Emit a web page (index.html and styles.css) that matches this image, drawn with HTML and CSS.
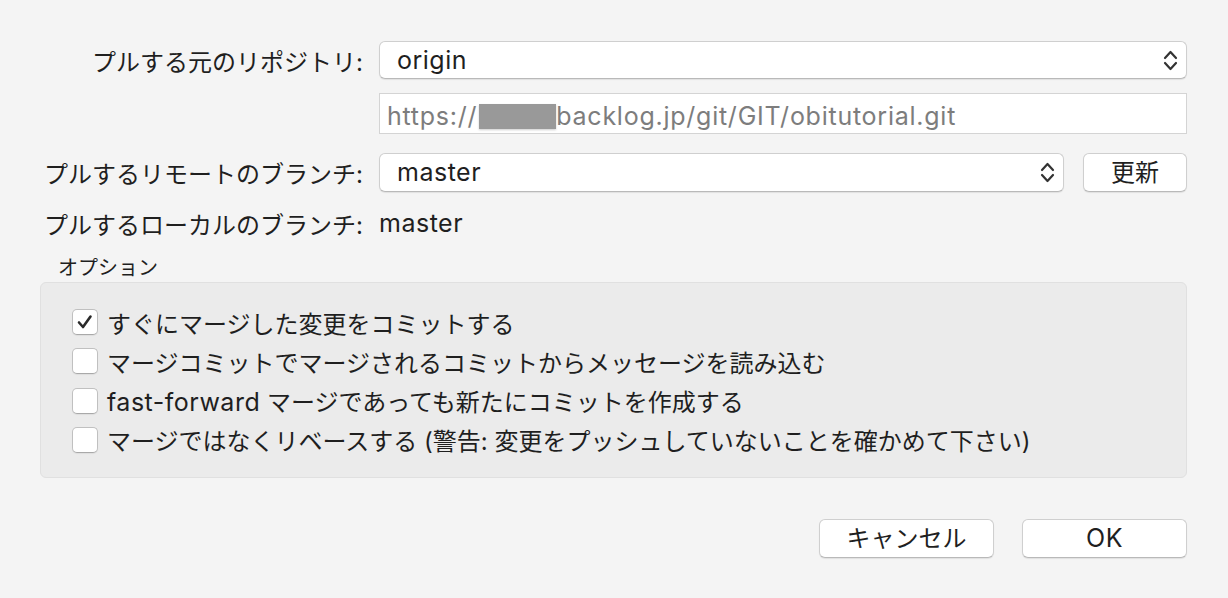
FILE: index.html
```html
<!DOCTYPE html>
<html lang="ja">
<head>
<meta charset="utf-8">
<title>プル</title>
<link rel="stylesheet" href="styles.css">
</head>
<body>
<div class="dialog">
  <div class="row row-repo">
    <div class="label">プルする元のリポジトリ:</div>
    <div class="popup popup-wide">
      <span class="popup-text lat">origin</span>
      <svg class="chev" viewBox="0 0 15 23" width="15" height="23"><path d="M2 9 L7.5 3 L13 9 M2 14 L7.5 20 L13 14" fill="none" stroke="#333" stroke-width="2.2" stroke-linecap="round" stroke-linejoin="round"/></svg>
    </div>
  </div>
  <div class="row row-url">
    <div class="label"></div>
    <div class="field"><span class="lat">https://</span><span class="redact"></span><span class="lat">backlog.jp/git/GIT/obitutorial.git</span></div>
  </div>
  <div class="row row-remote">
    <div class="label">プルするリモートのブランチ:</div>
    <div class="popup popup-branch">
      <span class="popup-text lat">master</span>
      <svg class="chev" viewBox="0 0 15 23" width="15" height="23"><path d="M2 9 L7.5 3 L13 9 M2 14 L7.5 20 L13 14" fill="none" stroke="#333" stroke-width="2.2" stroke-linecap="round" stroke-linejoin="round"/></svg>
    </div>
    <button class="btn btn-refresh">更新</button>
  </div>
  <div class="row row-local">
    <div class="label">プルするローカルのブランチ:</div>
    <div class="value lat">master</div>
  </div>
  <div class="options-title">オプション</div>
  <div class="options">
    <label class="opt"><span class="cb checked"><svg viewBox="0 0 26 26" width="26" height="26"><path d="M7 13.5 L11 18 L18.5 7.5" fill="none" stroke="#2a2a2a" stroke-width="2.6" stroke-linecap="round" stroke-linejoin="round"/></svg></span><span>すぐにマージした変更をコミットする</span></label>
    <label class="opt"><span class="cb"></span><span>マージコミットでマージされるコミットからメッセージを読み込む</span></label>
    <label class="opt"><span class="cb"></span><span><span class="lat">fast-forward</span> マージであっても新たにコミットを作成する</span></label>
    <label class="opt"><span class="cb"></span><span>マージではなくリベースする (警告: 変更をプッシュしていないことを確かめて下さい)</span></label>
  </div>
  <div class="actions">
    <button class="btn btn-cancel">キャンセル</button>
    <button class="btn btn-ok"><span class="lat">OK</span></button>
  </div>
</div>
</body>
</html>
```
FILE: styles.css
```css
* { box-sizing: border-box; }
html, body {
  margin: 0;
  padding: 0;
  background: #f4f4f4;
}
body {
  font-family: "Inter", "Noto Sans CJK JP", sans-serif;
  font-size: 24px;
  color: #1f1f1f;
}
.lat {
  font-size: 25px;
  letter-spacing: 0.5px;
}
.dialog {
  width: 1228px;
  height: 598px;
  padding: 41px 41px 0 40px;
}
.row {
  display: flex;
  align-items: center;
}
.label {
  width: 323px;
  flex: none;
  text-align: right;
  margin-right: 16px;
  white-space: nowrap;
}
.popup {
  height: 38px;
  background: #fff;
  border: 1px solid #cfcfcf;
  border-bottom-color: #b9b9b9;
  border-radius: 6px;
  box-shadow: 0 1px 1px rgba(0,0,0,0.08);
  display: flex;
  align-items: center;
  justify-content: space-between;
  padding: 0 8px 0 17px;
}
.popup-wide { flex: 1; }
.popup-branch { width: 685px; height: 39px; }
.popup-text { line-height: 1; }
.chev { display: block; }
.row-url { margin-top: 14px; }
.field {
  flex: 1;
  height: 41px;
  background: #fff;
  border: 1px solid #d4d4d4;
  color: #7d7d7d;
  padding: 4px 7px 0;
  display: flex;
  align-items: center;
  white-space: nowrap;
}
.field .lat { letter-spacing: 0.75px; }
.redact {
  display: inline-block;
  width: 77px;
  height: 25px;
  background: #999;
  margin-top: 1px;
  margin-left: 2px;
  box-shadow: 0 1px 2px rgba(0,0,0,0.2);
}
.row-remote { margin-top: 19px; }
.btn {
  font: inherit;
  color: #1f1f1f;
  background: #fff;
  border: 1px solid #cfcfcf;
  border-bottom-color: #b9b9b9;
  border-radius: 6px;
  box-shadow: 0 1px 1px rgba(0,0,0,0.08);
  padding: 0;
  height: 39px;
  line-height: 1;
}
.btn-refresh {
  width: 104px;
  margin-left: 19px;
}
.row-local {
  margin-top: 16px;
  height: 30px;
}
.value { line-height: 1; }
.options-title {
  font-size: 20px;
  margin: 18px 0 0 18px;
  height: 25px;
  line-height: 25px;
}
.options {
  margin-top: 1px;
  width: 1147px;
  height: 196px;
  background: #ebebeb;
  border: 1px solid #e0e0e0;
  border-radius: 6px;
  padding: 26px 0 0 31px;
  display: flex;
  flex-direction: column;
  gap: 13.3px;
}
.opt {
  display: flex;
  align-items: center;
  height: 26px;
  white-space: nowrap;
}
.cb {
  width: 26px;
  height: 26px;
  flex: none;
  background: #fff;
  border: 1px solid #c0c0c0;
  border-bottom-color: #a9a9a9;
  border-radius: 5px;
  margin-right: 9px;
  box-shadow: 0 1px 1px rgba(0,0,0,0.06);
  position: relative;
}
.cb svg {
  position: absolute;
  left: -1px;
  top: -1px;
}
.actions {
  display: flex;
  justify-content: flex-end;
  gap: 28px;
  margin-top: 41px;
}
.btn-cancel { width: 175px; }
.btn-ok { width: 165px; }
```
